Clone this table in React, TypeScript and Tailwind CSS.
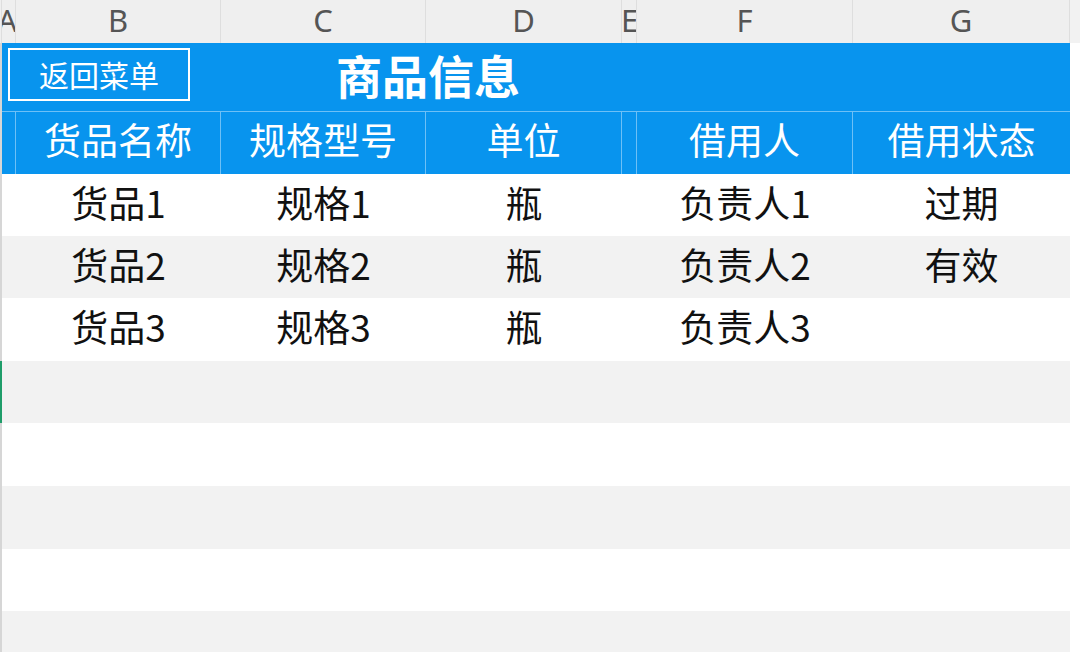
import React from "react";

const W = [2, 14, 205, 205, 196, 15, 216, 217];
const FONT = { fontFamily: '"Noto Sans CJK SC", "Noto Sans", sans-serif' };

const rows = [
  ["货品1", "规格1", "瓶", "负责人1", "过期"],
  ["货品2", "规格2", "瓶", "负责人2", "有效"],
  ["货品3", "规格3", "瓶", "负责人3", ""],
  ["", "", "", "", ""],
  ["", "", "", "", ""],
  ["", "", "", "", ""],
  ["", "", "", "", ""],
  ["", "", "", "", ""],
];
const heights = [62, 62, 63, 62, 63, 63, 62, 62];

function ColHeader() {
  const letters = ["", "A", "B", "C", "D", "E", "F", "G"];
  return (
    <div className="flex h-[43px] bg-[#efefef]" style={{ fontFamily: '"Noto Sans", "Open Sans", sans-serif' }}>
      {letters.map((l, i) => (
        <div
          key={i}
          className={`flex h-full shrink-0 items-center overflow-hidden border-r border-[#dedede] pb-[2px] text-[31px] text-[#555] ${i === 1 ? "justify-end" : i === 5 ? "justify-start" : "justify-center"}`}
          style={{ width: W[i] }}
        >
          {l && <span className={i === 1 ? "-mr-[2px] leading-none" : i === 5 ? "-ml-[1px] leading-none" : "leading-none"}>{l}</span>}
        </div>
      ))}
      <div className="h-full flex-1 bg-[#f2f2f2]" />
    </div>
  );
}

function TitleRow() {
  return (
    <div className="flex h-[68px]">
      <div className="h-full w-[2px] shrink-0 bg-[#d6d6d6]" />
      <div className="flex h-full w-[1068px] shrink-0 items-start bg-[#0894ee]" style={FONT}>
        <div className="ml-[6px] mt-[5px] flex h-[53px] w-[182px] items-center justify-center border-2 border-white pb-[2px] text-[30px] leading-none text-white">
          返回菜单
        </div>
        <div className="ml-[146px] mt-[8px] text-[46px] font-bold leading-none text-white">商品信息</div>
      </div>
      <div className="h-full flex-1 bg-white" />
    </div>
  );
}

function HeaderRow() {
  const labels = ["", "", "货品名称", "规格型号", "单位", "", "借用人", "借用状态"];
  return (
    <div className="flex h-[63px]" style={FONT}>
      {labels.map((l, i) =>
        i === 0 ? (
          <div key={i} className="h-full w-[2px] shrink-0 bg-[#d6d6d6]" />
        ) : (
          <div
            key={i}
            className={`flex h-full shrink-0 items-center justify-center border-t border-[#6dc0f6] bg-[#0894ee] pb-[7px] text-[37px] leading-none text-white ${i < 7 ? "border-r border-r-[#6dc0f6]" : ""}`}
            style={{ width: W[i] }}
          >
            {l}
          </div>
        )
      )}
      <div className="h-full flex-1 bg-white" />
    </div>
  );
}

function DataRow({ cells, h, idx }: { cells: string[]; h: number; idx: number }) {
  const gray = idx % 2 === 1;
  const bg = gray ? "bg-[#f2f2f2]" : "bg-white";
  const map: Record<number, string> = { 2: cells[0], 3: cells[1], 4: cells[2], 6: cells[3], 7: cells[4] };
  return (
    <div className="flex" style={{ height: h, ...FONT }}>
      <div className={`h-full w-[2px] shrink-0 ${idx === 3 ? "bg-[#1f9d6a]" : "bg-[#d6d6d6]"}`} />
      {W.slice(1).map((w, j) => {
        const i = j + 1;
        return (
          <div
            key={i}
            className={`flex h-full shrink-0 items-center justify-center pb-[6px] text-[37px] leading-none text-[#111] ${bg}`}
            style={{ width: w }}
          >
            {map[i] ?? ""}
          </div>
        );
      })}
      <div className="h-full flex-1 bg-white" />
    </div>
  );
}

export default function App() {
  return (
    <div className="h-[652px] w-[1080px] overflow-hidden bg-white">
      <ColHeader />
      <TitleRow />
      <HeaderRow />
      {rows.map((r, i) => (
        <DataRow key={i} cells={r} h={heights[i]} idx={i} />
      ))}
    </div>
  );
}
